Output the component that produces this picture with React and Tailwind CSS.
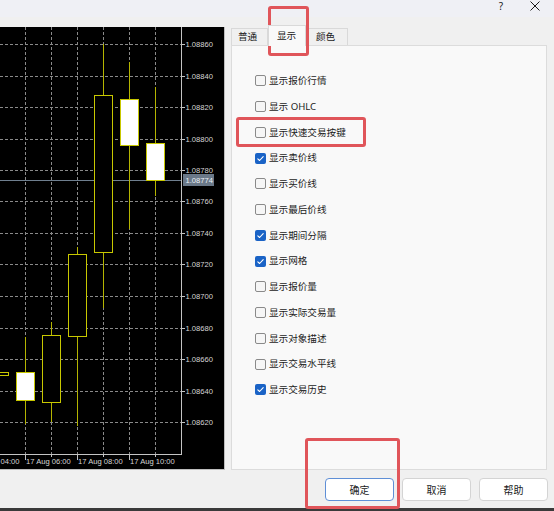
import React from "react";

const rows = [
  ["显示报价行情", false],
  ["显示 OHLC", false],
  ["显示快速交易按键", false],
  ["显示卖价线", true],
  ["显示买价线", false],
  ["显示最后价线", false],
  ["显示期间分隔", true],
  ["显示网格", true],
  ["显示报价量", false],
  ["显示实际交易量", false],
  ["显示对象描述", false],
  ["显示交易水平线", false],
  ["显示交易历史", true],
];

const prices = [
  ["1.08860", 44],
  ["1.08840", 76],
  ["1.08820", 107],
  ["1.08800", 139],
  ["1.08780", 170],
  ["1.08760", 201],
  ["1.08740", 233],
  ["1.08720", 264],
  ["1.08700", 296],
  ["1.08680", 328],
  ["1.08660", 359],
  ["1.08640", 391],
  ["1.08620", 422],
];

const vx = [25, 51, 77, 103, 129, 155];

// cx, wickTop, bodyTop, bodyBottom, wickBottom, bear(white)
const candles = [
  [-1, 372, 372, 375, 375, false],
  [25, 337, 372, 400, 424, true],
  [51, 322, 335, 402, 422, false],
  [77, 247, 254, 336, 426, false],
  [103, 44, 95, 252, 308, false],
  [129, 62, 99, 145, 229, true],
  [155, 87, 143, 180, 196, true],
];

function Chart() {
  const font = { fontFamily: "'Liberation Sans', Arial, sans-serif" };
  return (
    <svg width="225" height="443" viewBox="0 27 225 443" className="block">
      <rect x="0" y="27" width="225" height="443" fill="#000" />
      {prices.map(([p, y]) => (
        <line key={p} x1="0" x2="181" y1={y + 0.5} y2={y + 0.5} stroke="#8a8a8a" strokeWidth="1" strokeDasharray="3 2" />
      ))}
      {vx.map((x) => (
        <line key={x} x1={x + 0.5} x2={x + 0.5} y1="27" y2="454" stroke="#8a8a8a" strokeWidth="1" strokeDasharray="3 2" />
      ))}
      <line x1="0" x2="181" y1="180.5" y2="180.5" stroke="#6f7f8f" strokeWidth="1" />
      {candles.map(([cx, wt, bt, bb, wb, bear], i) => (
        <g key={i}>
          <line x1={cx + 0.5} x2={cx + 0.5} y1={wt} y2={bt} stroke="#b4b400" strokeWidth="1" />
          <line x1={cx + 0.5} x2={cx + 0.5} y1={bb} y2={wb} stroke="#b4b400" strokeWidth="1" />
          <rect
            x={cx - 8.5}
            y={bt + 0.5}
            width="18"
            height={Math.max(bb - bt, 1)}
            fill={bear ? "#ffffff" : "#000000"}
            stroke="#c8c800"
            strokeWidth="1"
          />
        </g>
      ))}
      <line x1="181.5" x2="181.5" y1="27" y2="454.5" stroke="#c4c4c4" strokeWidth="1" />
      <line x1="0" x2="182" y1="454.5" y2="454.5" stroke="#c4c4c4" strokeWidth="1" />
      {prices.map(([p, y]) => (
        <g key={"l" + p}>
          <line x1="181" x2="185" y1={y + 0.5} y2={y + 0.5} stroke="#c4c4c4" strokeWidth="1" />
          <text x="185.5" y={y + 3} fontSize="7.6" fill="#d6d6d6" style={font}>
            {p}
          </text>
        </g>
      ))}
      <rect x="183" y="174" width="31" height="12" fill="#6a7888" />
      <text x="185.5" y="183" fontSize="7.6" fill="#eef2f6" style={font}>
        1.08774
      </text>
      {vx.map((x, i) => (
        <line key={"t" + x} x1={x + 0.5} x2={x + 0.5} y1="454" y2={i % 2 === 0 ? 460 : 457} stroke="#c4c4c4" strokeWidth="1" />
      ))}
      {[
        [0.5, "04:00"],
        [26, "17 Aug 06:00"],
        [78, "17 Aug 08:00"],
        [130, "17 Aug 10:00"],
      ].map(([x, t]) => (
        <text key={t} x={x} y="464" fontSize="7.6" fill="#d6d6d6" style={font}>
          {t}
        </text>
      ))}
      <line x1="224.5" x2="224.5" y1="27" y2="470" stroke="#bdbdbd" strokeWidth="1" />
      <line x1="0" x2="225" y1="469.5" y2="469.5" stroke="#bdbdbd" strokeWidth="1" />
    </svg>
  );
}

function Checkbox({ checked }) {
  if (checked) {
    return (
      <span className="w-[11px] h-[11px] rounded-[2px] bg-[#1a63c6] flex items-center justify-center shrink-0">
        <svg width="9" height="9" viewBox="0 0 9 9">
          <path d="M1.8 4.8 L3.6 6.5 L7.2 2.6" fill="none" stroke="#ffffff" strokeWidth="1.1" strokeLinecap="round" strokeLinejoin="round" />
        </svg>
      </span>
    );
  }
  return <span className="w-[11px] h-[11px] rounded-[2px] border border-[#8a8a8a] bg-[#f6f6f6] shrink-0" />;
}

export default function App() {
  const ui = { fontFamily: "'Noto Sans', 'Noto Sans CJK SC', sans-serif" };
  return (
    <div className="w-[554px] h-[511px] bg-[#f0f0f0] flex flex-col relative overflow-hidden" style={ui}>
      <div className="h-[17px] bg-[#eff0f5] flex items-start justify-end text-[#1a1a1a]">
        <span className="text-[10px] leading-none mt-[1px] mr-[27px]">?</span>
        <svg width="10" height="10" viewBox="0 0 10 10" className="mt-[1px] mr-[14px]">
          <path d="M0.5 0.5 L9.5 9.5 M9.5 0.5 L0.5 9.5" stroke="#1a1a1a" strokeWidth="1" />
        </svg>
      </div>
      <div className="flex h-[453px]">
        <div className="pt-[10px]">
          <div className="w-[225px] h-[443px] bg-black">
            <Chart />
          </div>
        </div>
        <div className="ml-[6px] w-[316px] flex flex-col pt-[8px]">
          <div className="h-[20px] flex items-end text-[9.6px] leading-none text-[#1a1a1a]">
            <div className="w-[37px] h-[17px] border border-b-0 border-[#d9d9d9] bg-[#f0f0f0] flex items-center pl-[6px]">
              普通
            </div>
            <div className="w-[38px] h-[21px] border border-b-0 border-[#d9d9d9] bg-[#f9f9f9] flex items-center pl-[8px] relative z-10 mb-[-1px] pb-[1px]">
              显示
            </div>
            <div className="w-[42px] h-[17px] border border-b-0 border-l-0 border-[#d9d9d9] bg-[#f0f0f0] flex items-center pl-[10px]">
              颜色
            </div>
          </div>
          <div className="h-[425px] border border-[#dcdcdc] bg-[#f9f9f9] pt-[22px] pl-[23px] flex flex-col">
            {rows.map(([label, checked]) => (
              <div key={label} className="h-[25.75px] flex items-center gap-[3px] text-[9.6px] leading-none text-[#1b1b1b]">
                <Checkbox checked={checked} />
                <span>{label}</span>
              </div>
            ))}
          </div>
        </div>
      </div>
      <div className="h-[38px] flex justify-end items-start pt-[8px] pr-[6px] gap-[8px] text-[10px] text-[#1a1a1a]">
        <button className="w-[69px] h-[23px] rounded-[4px] bg-white border border-[#5f8fd6] flex items-center justify-center leading-none">
          确定
        </button>
        <button className="w-[69px] h-[23px] rounded-[4px] bg-white border border-[#d4d4d4] flex items-center justify-center leading-none">
          取消
        </button>
        <button className="w-[69px] h-[23px] rounded-[4px] bg-white border border-[#d4d4d4] flex items-center justify-center leading-none">
          帮助
        </button>
      </div>
      <div className="h-[3px] bg-[#3a3a3a]" />

      <div className="absolute left-[268px] top-[6px] w-[41px] h-[50px] border-[3px] border-[#e0555a] rounded-[3px] pointer-events-none" />
      <div className="absolute left-[236px] top-[117px] w-[130px] h-[30px] border-[3px] border-[#e0555a] rounded-[3px] pointer-events-none" />
      <div className="absolute left-[305px] top-[438px] w-[95px] h-[71px] border-[3px] border-[#e0555a] rounded-[3px] pointer-events-none" />
    </div>
  );
}
